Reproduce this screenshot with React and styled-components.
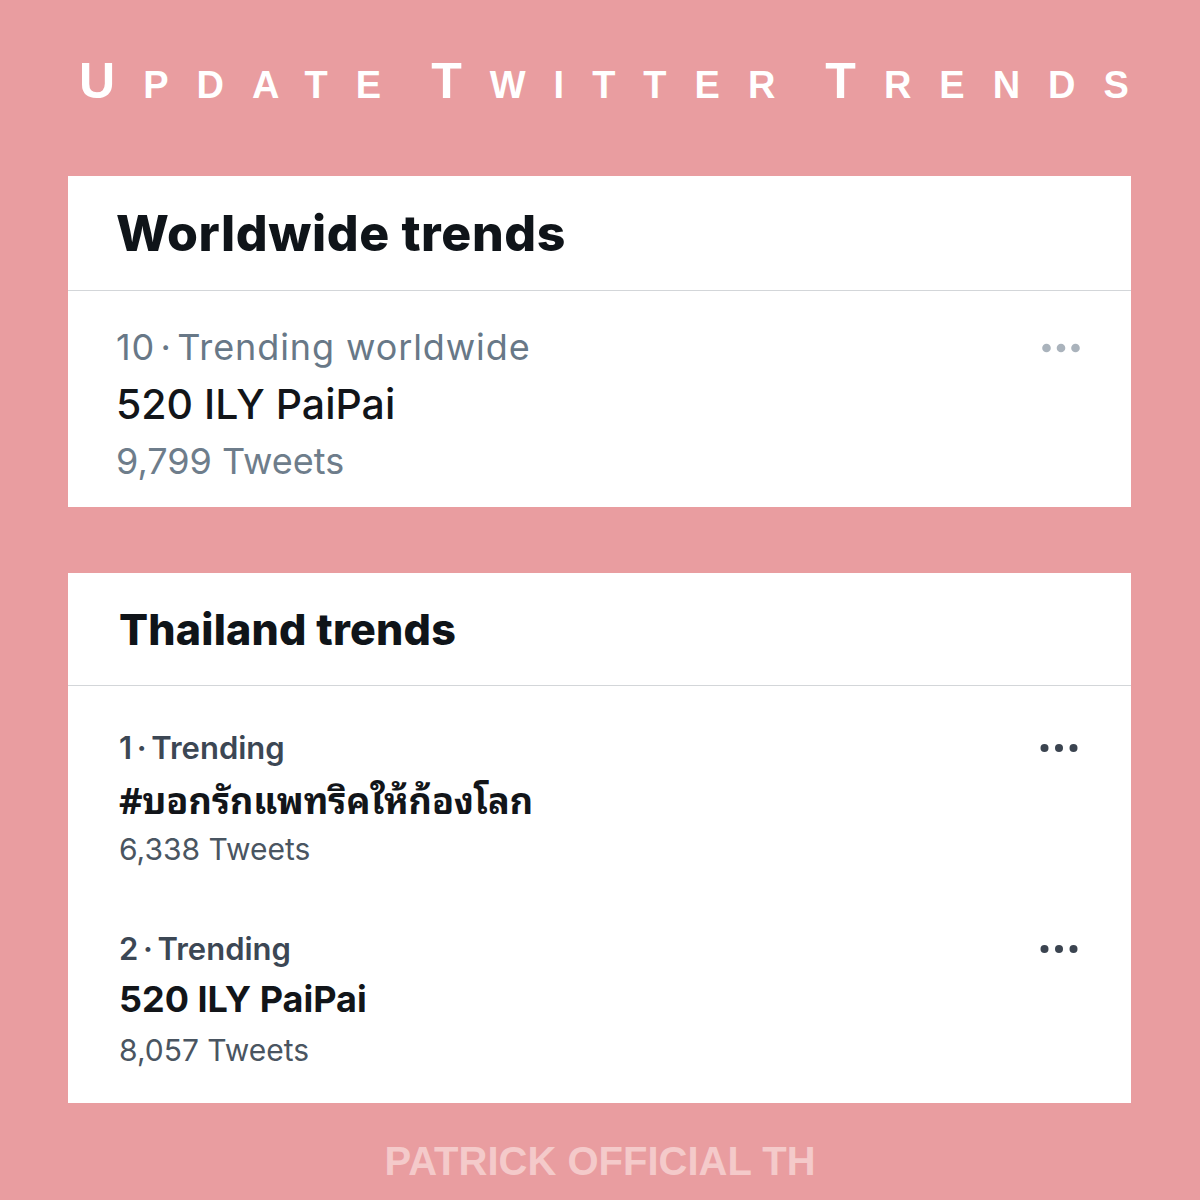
import React from 'react';
import styled, { createGlobalStyle, css } from 'styled-components';

const GlobalStyle = createGlobalStyle`
  html, body {
    margin: 0;
    padding: 0;
    background: #e99da0;
  }
  body {
    font-family: Inter, "Liberation Sans", "Noto Sans Thai", "Noto Sans", sans-serif;
  }
`;

const Page = styled.div`
  width: 1200px;
  height: 1200px;
  background: #e99da0;
  display: flex;
  flex-direction: column;
  align-items: center;
  overflow: hidden;
`;

const Title = styled.h1`
  margin: 0;
  height: 176px;
  box-sizing: border-box;
  padding: 51px 0 0 8px;
  display: flex;
  align-items: baseline;
  justify-content: center;
  gap: 50px;
  font-family: "Liberation Sans", Arial, sans-serif;
  font-weight: 700;
  line-height: 60px;
  color: #ffffff;
  text-transform: uppercase;
`;

const Word = styled.span`
  font-size: 38px;
  letter-spacing: 28px;
  margin-right: -28px;
`;

const Initial = styled.span`
  font-size: 50px;
`;

const Card = styled.section`
  width: 1063px;
  margin-left: -1px;
  background: #ffffff;
  display: flex;
  flex-direction: column;
  margin-bottom: ${(p) => p.$gap || 0}px;
`;

const CardHeader = styled.div`
  height: ${(p) => (p.$large ? 115 : 113)}px;
  display: flex;
  align-items: center;
  padding-left: ${(p) => (p.$large ? 48 : 51)}px;
  border-bottom: 1px solid #d3d6d9;
  box-sizing: border-box;
  font-weight: 800;
  font-size: ${(p) => (p.$large ? 50 : 43)}px;
  letter-spacing: ${(p) => (p.$large ? 0.6 : 0.2)}px;
  color: #0f1419;
`;

const List = styled.div`
  padding-top: ${(p) => (p.$large ? 28 : 12)}px;
  padding-bottom: ${(p) => (p.$large ? 17 : 3)}px;
`;

const Item = styled.div`
  display: flex;
  justify-content: space-between;
  align-items: flex-start;
  padding: ${(p) => (p.$large ? '0 51px 0 48px' : '24px 53px 24px 51px')};
`;

const ItemText = styled.div`
  display: flex;
  flex-direction: column;
`;

const lineHeight = css`
  line-height: ${(p) => (p.$large ? 57 : 51)}px;
  height: ${(p) => (p.$large ? 57 : 51)}px;
  white-space: nowrap;
`;

const Meta = styled.div`
  ${lineHeight}
  font-size: ${(p) => (p.$large ? 36 : 31)}px;
  font-weight: ${(p) => (p.$large ? 400 : 600)};
  letter-spacing: ${(p) => (p.$large ? 0.9 : 0)}px;
  color: ${(p) => (p.$large ? '#687887' : '#3c4754')};
`;

const Dot = styled.span`
  margin: 0 0.15em;
`;

const Name = styled.div`
  ${lineHeight}
  font-size: ${(p) => (p.$large ? 41 : 36)}px;
  font-weight: ${(p) => (p.$large ? 500 : 700)};
  color: #121519;
`;

const ThaiName = styled(Name)`
  font-family: "Noto Sans Thai Looped", "Noto Looped Thai", "Noto Sans Thai", Inter, sans-serif;
`;

const Count = styled.div`
  ${lineHeight}
  font-size: ${(p) => (p.$large ? 36 : 30)}px;
  color: ${(p) => (p.$large ? '#6e7d8b' : '#4a5561')};
`;

const More = styled.div`
  ${lineHeight}
  display: flex;
  align-items: center;
`;

const Footer = styled.div`
  margin-top: 36px;
  font-family: "Liberation Sans", Arial, sans-serif;
  font-weight: 700;
  font-size: 40px;
  color: #f4caca;
`;

const MoreIcon = ({ color, r }) => (
  <svg width="38" height="12" viewBox="0 0 38 12">
    <circle cx={4.5} cy={6} r={r} fill={color} />
    <circle cx={19} cy={6} r={r} fill={color} />
    <circle cx={33.5} cy={6} r={r} fill={color} />
  </svg>
);

const Trend = ({ large, rank, label, name, count, thai }) => {
  const NameText = thai ? ThaiName : Name;
  return (
    <Item $large={large}>
      <ItemText>
        <Meta $large={large}>
          {rank}<Dot>·</Dot>{label}
        </Meta>
        <NameText $large={large}>{name}</NameText>
        <Count $large={large}>{count}</Count>
      </ItemText>
      <More $large={large}>
        {large ? <MoreIcon color="#aab3bc" r={4.3} /> : <MoreIcon color="#3b4450" r={4} />}
      </More>
    </Item>
  );
};

const TitleWord = ({ word }) => (
  <Word>
    <Initial>{word[0]}</Initial>
    {word.slice(1)}
  </Word>
);

export default function App() {
  return (
    <>
      <GlobalStyle />
      <Page>
        <Title>
          <TitleWord word="Update" />
          <TitleWord word="Twitter" />
          <TitleWord word="Trends" />
        </Title>
        <Card $gap={66}>
          <CardHeader $large>Worldwide trends</CardHeader>
          <List $large>
            <Trend large rank="10" label="Trending worldwide" name="520 ILY PaiPai" count="9,799 Tweets" />
          </List>
        </Card>
        <Card>
          <CardHeader>Thailand trends</CardHeader>
          <List>
            <Trend thai rank="1" label="Trending" name="#บอกรักแพทริคให้ก้องโลก" count="6,338 Tweets" />
            <Trend rank="2" label="Trending" name="520 ILY PaiPai" count="8,057 Tweets" />
          </List>
        </Card>
        <Footer>PATRICK OFFICIAL TH</Footer>
      </Page>
    </>
  );
}
